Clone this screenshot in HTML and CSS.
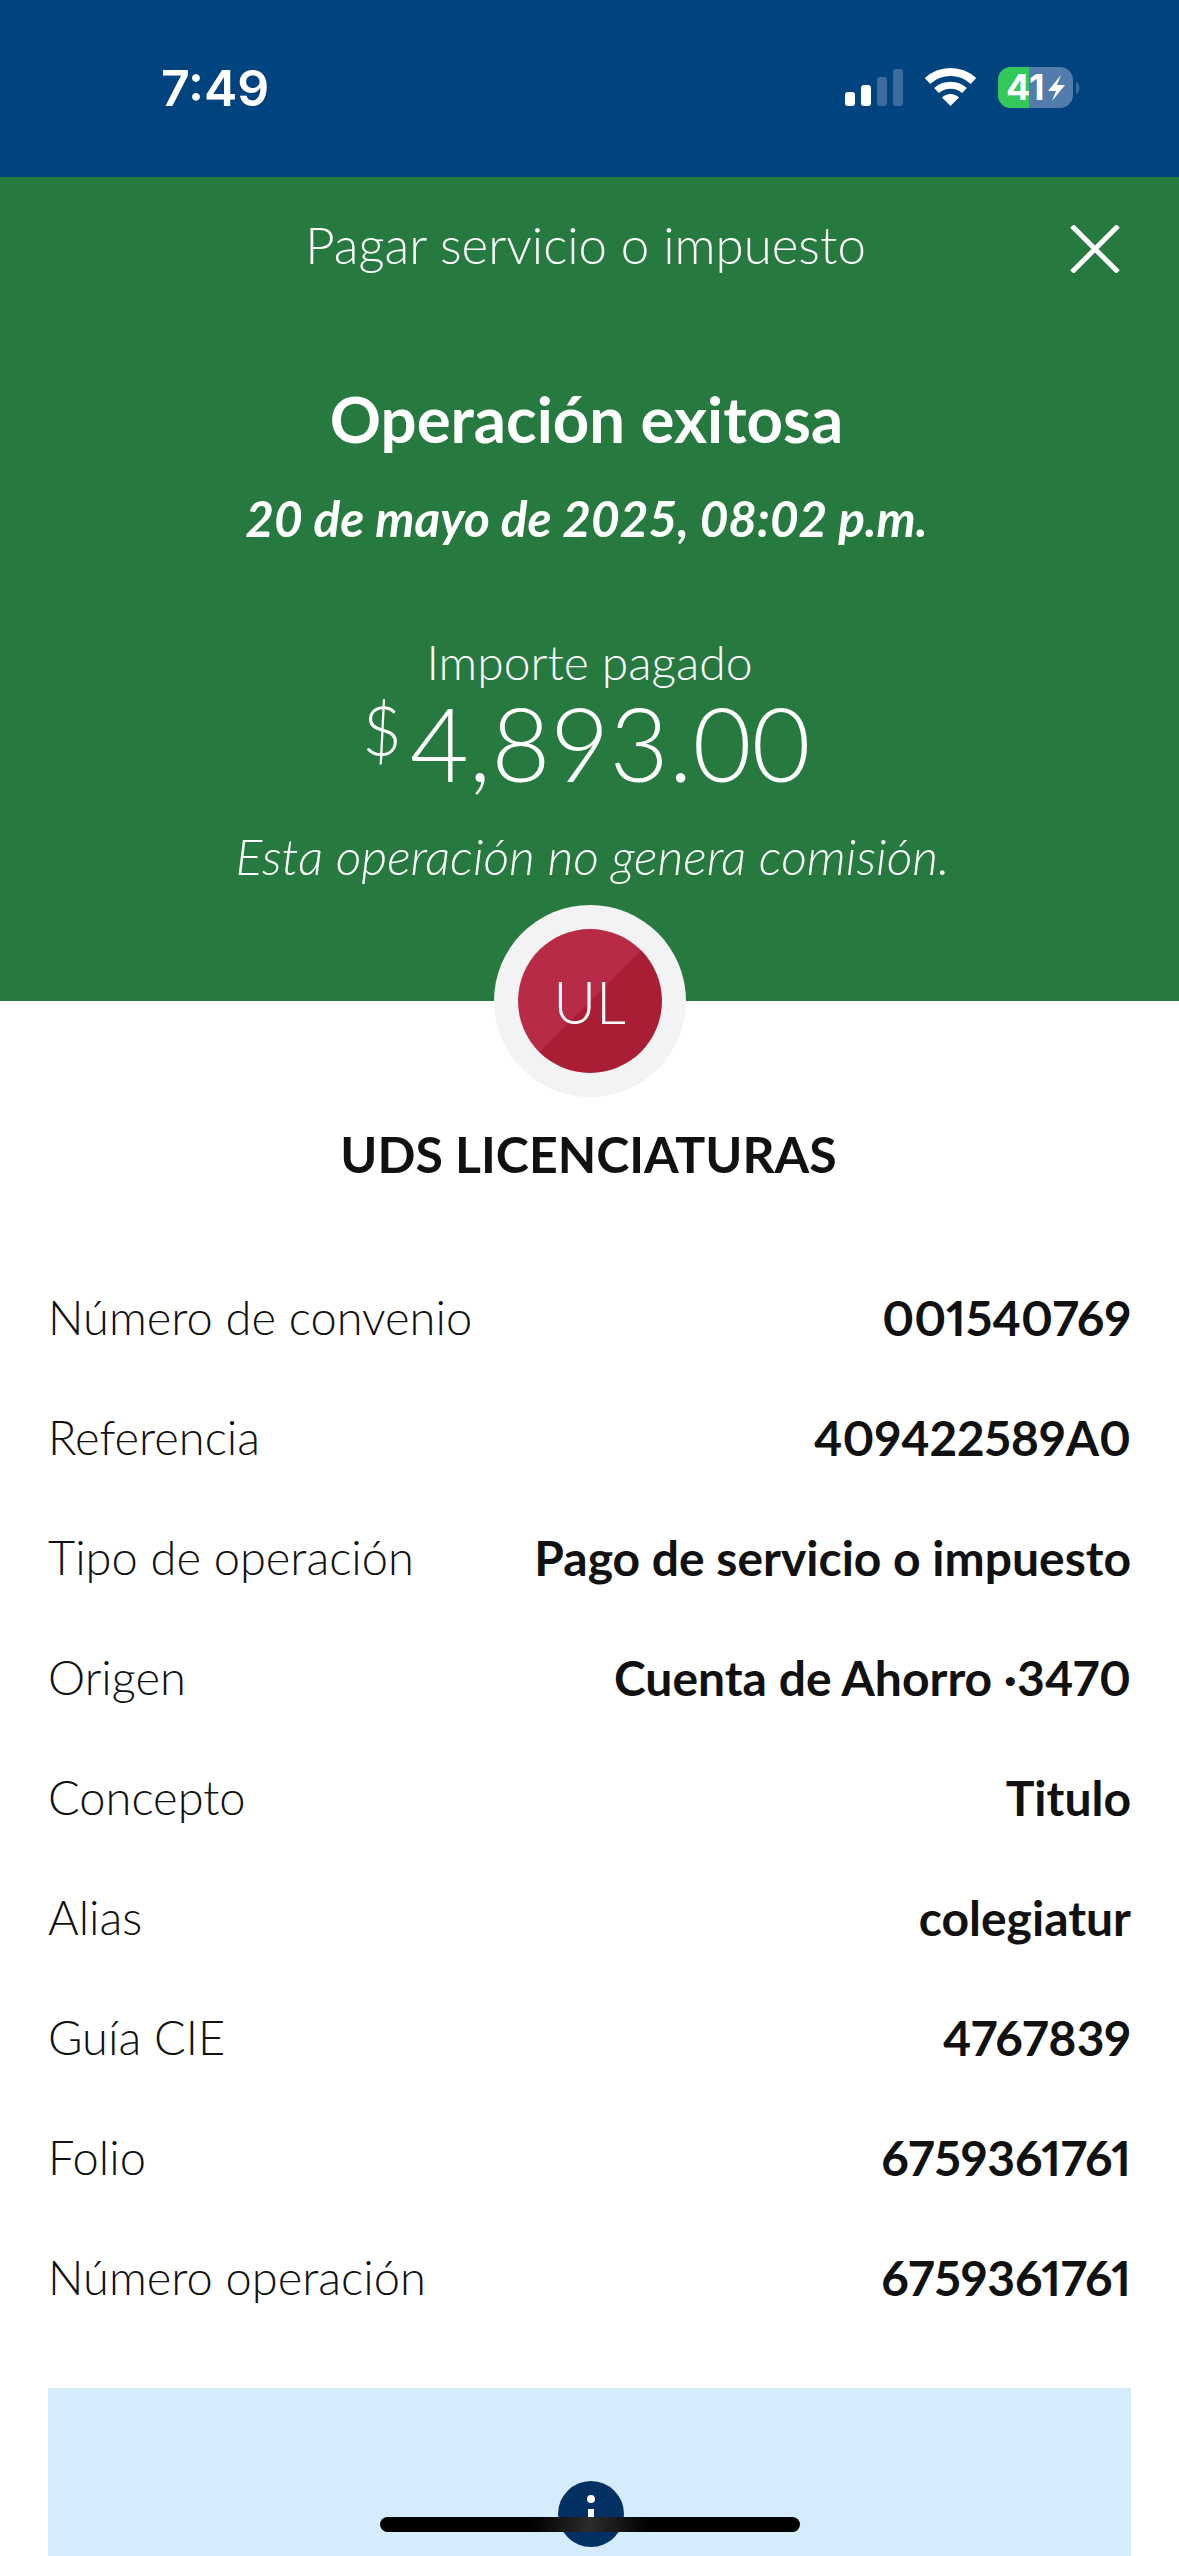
FILE: index.html

```html
<!DOCTYPE html>
<html lang="es">
<head>
  <meta charset="UTF-8" />
  <meta name="viewport" content="width=device-width, initial-scale=1.0" />
  <title>Pagar servicio o impuesto</title>
  <link rel="stylesheet" href="styles.css">
</head>
<body>
  <div class="page">
    <div class="status-bar">
      <span class="clock">7:49</span>
      <svg class="status-icons" viewBox="0 0 236 42" width="236" height="42">
        <defs>
          <clipPath id="battClip"><rect x="153" y="0" width="75" height="41" rx="13"/></clipPath>
        </defs>
        <rect x="0" y="25" width="10" height="14" rx="3" fill="#fff"/>
        <rect x="16" y="18" width="10" height="21" rx="3" fill="#fff"/>
        <rect x="32" y="10" width="10" height="29" rx="3" fill="#3b6c9e"/>
        <rect x="48" y="2" width="10" height="37" rx="3" fill="#3b6c9e"/>
        <path d="M82.5 14 A34 34 0 0 1 128.5 14" fill="none" stroke="#fff" stroke-width="8"/>
        <path d="M91.5 23.5 A21 21 0 0 1 119.5 23.5" fill="none" stroke="#fff" stroke-width="7"/>
        <path d="M105.5 39 L97 30.5 A12 12 0 0 1 114 30.5 Z" fill="#fff"/>
        <g clip-path="url(#battClip)">
          <rect x="153" y="0" width="75" height="41" fill="#517cab"/>
          <rect x="153" y="0" width="31" height="41" fill="#34c759"/>
        </g>
        <path d="M231 15 A7 7 0 0 1 231 27 Z" fill="#3b6c9e"/>
        <text class="batt-num" x="161" y="33">41</text>
        <path d="M216 8 L203 24 H211 L207 34 L220 18 H212 Z" fill="#fff"/>
      </svg>
    </div>

    <header class="result">
      <div class="result-top">
        <span class="result-title">Pagar servicio o impuesto</span>
        <svg class="close" viewBox="0 0 50 48" width="50" height="48">
          <path d="M2 1 L48 47 M48 1 L2 47" stroke="#fff" stroke-width="5" fill="none"/>
        </svg>
      </div>
      <h1>Operación exitosa</h1>
      <p class="date">20 de mayo de 2025, 08:02 p.m.</p>
      <p class="amount-label">Importe pagado</p>
      <p class="amount"><span class="currency">$</span>4,893.00</p>
      <p class="note">Esta operación no genera comisión.</p>
    </header>

    <div class="avatar-ring">
      <div class="avatar">UL</div>
    </div>
    <h2 class="payee">UDS LICENCIATURAS</h2>

    <div class="details">
      <div class="row"><span>Número de convenio</span><b>001540769</b></div>
      <div class="row"><span>Referencia</span><b>409422589A0</b></div>
      <div class="row"><span>Tipo de operación</span><b>Pago de servicio o impuesto</b></div>
      <div class="row"><span>Origen</span><b>Cuenta de Ahorro ·3470</b></div>
      <div class="row"><span>Concepto</span><b>Titulo</b></div>
      <div class="row"><span>Alias</span><b>colegiatur</b></div>
      <div class="row"><span>Guía CIE</span><b>4767839</b></div>
      <div class="row"><span>Folio</span><b>6759361761</b></div>
      <div class="row"><span>Número operación</span><b>6759361761</b></div>
    </div>

    <div class="info-box">
      <div class="info-icon">
        <svg viewBox="0 0 66 66" width="66" height="66">
          <circle cx="33" cy="33" r="33" fill="#023062"/>
          <circle cx="33" cy="18" r="4" fill="#fff"/>
          <rect x="30" y="28" width="6" height="22" fill="#fff"/>
        </svg>
      </div>
    </div>

    <div class="home-bar"></div>
  </div>
</body>
</html>
```

FILE: styles.css

```css
* {
  box-sizing: border-box;
}
html, body {
  margin: 0;
  padding: 0;
  background-color: #fff;
}
.page {
  position: relative;
  width: 1179px;
  height: 2556px;
  overflow: hidden;
  display: flex;
  flex-direction: column;
  font-family: Lato, "Open Sans", sans-serif;
  color: #111;
}

/* status bar */
.status-bar {
  height: 177px;
  flex: none;
  background-color: #00447f;
  display: flex;
  justify-content: space-between;
  align-items: flex-start;
  padding: 60px 98px 0 161px;
}
.clock {
  font-family: Inter, sans-serif;
  font-weight: 600;
  font-size: 50px;
  line-height: 56px;
  color: #fff;
}
.status-icons {
  margin-top: 7px;
}
.batt-num {
  font-family: Inter, sans-serif;
  font-weight: 700;
  font-size: 36px;
  fill: #fff;
}

/* green header */
.result {
  height: 824px;
  flex: none;
  background-color: #277a3f;
  color: #fff;
  text-align: center;
  padding-top: 39px;
}
.result-top {
  position: relative;
  height: 58px;
  line-height: 58px;
}
.result-title {
  font-size: 51px;
  font-weight: 300;
  margin-right: 8px;
}
.close {
  position: absolute;
  right: 59px;
  top: 9px;
}
.result h1 {
  margin: 107px 6px 0 0;
  font-size: 63.5px;
  line-height: 76px;
  font-weight: 700;
}
.date {
  margin: 32px 6px 0 0;
  font-size: 49.5px;
  line-height: 58px;
  font-weight: 700;
  font-style: italic;
}
.amount-label {
  margin: 86px 0 0;
  font-size: 48px;
  line-height: 58px;
  font-weight: 300;
}
.amount {
  margin: 0 6px 0 0;
  font-size: 102px;
  line-height: 104px;
  font-weight: 300;
}
.currency {
  font-size: 68px;
  line-height: 0;
  vertical-align: 26px;
  margin-right: 8px;
}
.note {
  margin: 32px 0 0 6px;
  font-size: 50px;
  line-height: 58px;
  font-weight: 300;
  font-style: italic;
}

/* payee */
.avatar-ring {
  width: 192px;
  height: 192px;
  flex: none;
  margin: -96px auto 0;
  border-radius: 50%;
  background-color: #f3f3f3;
  display: flex;
  align-items: center;
  justify-content: center;
  z-index: 1;
}
.avatar {
  width: 144px;
  height: 144px;
  border-radius: 50%;
  background: linear-gradient(135deg, #b82b47 50%, #a91e35 50%);
  color: #fff;
  font-size: 59px;
  font-weight: 300;
  display: flex;
  align-items: center;
  justify-content: center;
}
.payee {
  margin: 28px 2px 0 0;
  text-align: center;
  font-size: 50px;
  line-height: 58px;
  font-weight: 700;
}

/* details */
.details {
  margin-top: 74px;
  padding: 0 48px;
}
.row {
  height: 120px;
  display: flex;
  justify-content: space-between;
  align-items: center;
  font-size: 47px;
}
.row span {
  font-weight: 300;
}
.row b {
  font-size: 48px;
  font-weight: 700;
  font-variant-numeric: proportional-nums;
}

/* info box */
.info-box {
  flex: 1;
  margin: 51px 48px 0;
  background-color: #d4ecfc;
  padding-top: 93px;
  display: flex;
  justify-content: center;
}
.info-icon {
  height: 66px;
  margin-left: 3px;
}

.home-bar {
  position: absolute;
  left: 380px;
  top: 2517px;
  width: 420px;
  height: 15px;
  border-radius: 8px;
  background: linear-gradient(90deg, #000 36%, #2c2c2c 50%, #000 64%);
}
```
